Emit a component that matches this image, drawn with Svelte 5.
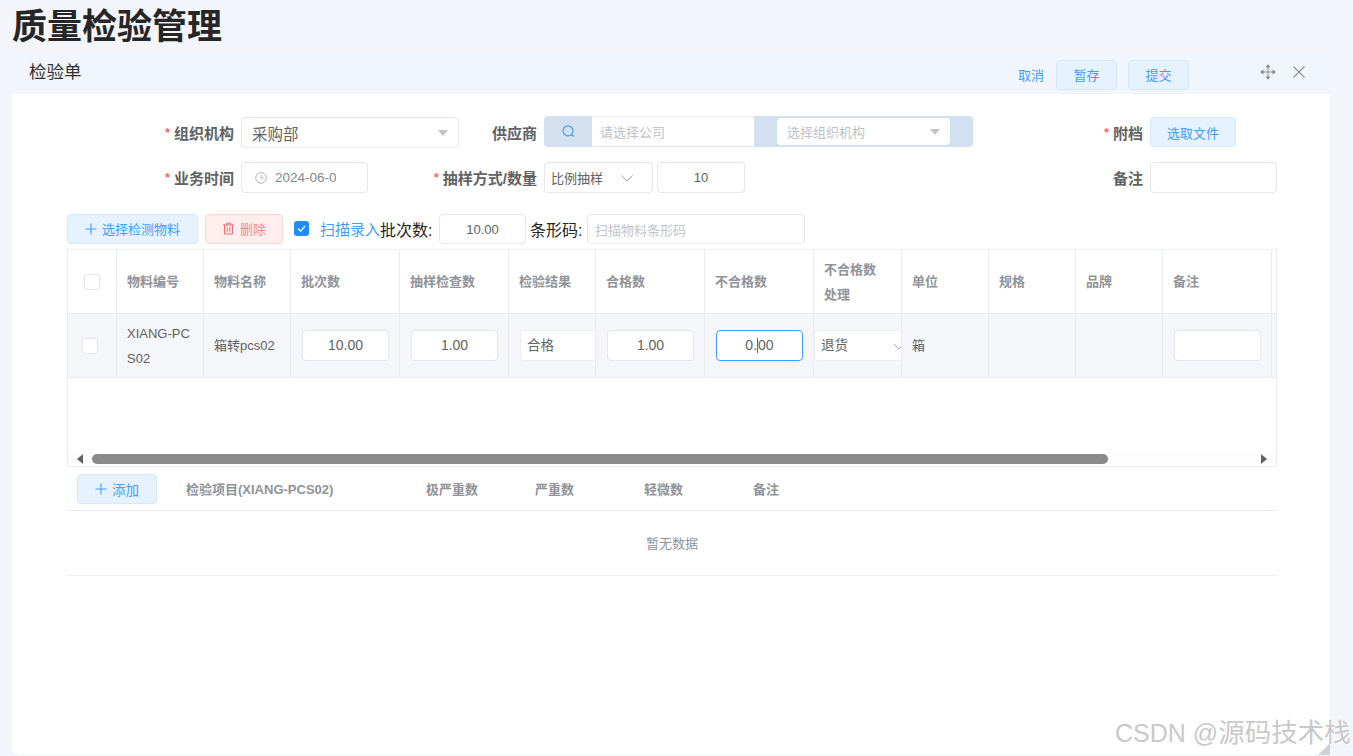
<script>
	const columns = [
		{ w: 49 }, { w: 87, title: '物料编号' }, { w: 87, title: '物料名称' }, { w: 109, title: '批次数' },
		{ w: 109, title: '抽样检查数' }, { w: 87, title: '检验结果' }, { w: 109, title: '合格数' },
		{ w: 109, title: '不合格数' }, { w: 88, title: '不合格数处理', wrap: true }, { w: 87, title: '单位' },
		{ w: 87, title: '规格' }, { w: 87, title: '品牌' }, { w: 109, title: '备注' }, { w: 40 }
	];
	const subHeads = [
		{ w: 240, title: '检验项目(XIANG-PCS02)' }, { w: 109, title: '极严重数' }, { w: 109, title: '严重数' },
		{ w: 109, title: '轻微数' }, { w: 109, title: '备注' }
	];
</script>

<div class="page">
	<h1>质量检验管理</h1>

	<section class="card">
		<header class="card-head">
			<span class="card-title">检验单</span>
			<div class="head-actions">
				<span class="link">取消</span>
				<span class="btn head-btn">暂存</span>
				<span class="btn head-btn">提交</span>
			</div>
			<div class="head-icons">
				<svg width="16" height="16" viewBox="0 0 16 16" fill="none" stroke="#8d9095" stroke-width="1">
					<path d="M8 1v14M1 8h14" />
					<path d="M6 3l2-2.200 2 2.200zM6 13l2 2.200 2-2.200zM3 6L.8 8 3 10zM13 6l2.200 2L13 10z" fill="#8d9095" />
				</svg>
				<svg width="14" height="14" viewBox="0 0 14 14" fill="none" stroke="#8d9095" stroke-width="1.100">
					<path d="M1.500 1.500l11 11M12.500 1.500l-11 11" />
				</svg>
			</div>
		</header>

		<div class="form">
			<label class="lbl"><i>*</i> 组织机构</label>
			<div class="field select big">
				<span>采购部</span>
				<b class="tri"></b>
			</div>
			<label class="lbl">供应商</label>
			<div class="supplier">
				<span class="search">
					<svg width="15" height="15" viewBox="0 0 15 15" fill="none" stroke="#409eff" stroke-width="1.200">
						<circle cx="7" cy="6.800" r="5" />
						<path d="M10.600 10.500l2 2" />
					</svg>
				</span>
				<span class="company">请选择公司</span>
				<span class="org-wrap">
					<span class="org"><span>选择组织机构</span><b class="tri"></b></span>
				</span>
			</div>
			<label class="lbl"><i>*</i> 附档</label>
			<div><span class="btn pick">选取文件</span></div>

			<label class="lbl"><i>*</i> 业务时间</label>
			<div class="field date">
				<svg width="14" height="14" viewBox="0 0 14 14" fill="none" stroke="#b4b7be" stroke-width="1">
					<circle cx="7" cy="7" r="5.300" />
					<path d="M7 3.800V7h2.800" />
				</svg>
				<span class="date-text">2024-06-05</span>
			</div>
			<label class="lbl"><i>*</i> 抽样方式/数量</label>
			<div class="sample">
				<div class="field select method">
					<span>比例抽样</span>
					<svg width="14" height="14" viewBox="0 0 14 14" fill="none" stroke="#a8abb2" stroke-width="1">
						<path d="M1.500 4.500L7 10l5.500-5.500" />
					</svg>
				</div>
				<div class="field center qty">10</div>
			</div>
			<label class="lbl">备注</label>
			<div class="field remark"></div>
		</div>

		<div class="toolbar">
			<span class="btn add-material">
				<svg class="plus" width="12" height="12" viewBox="0 0 12 12"><path d="M6 .5v11M.5 6h11" /></svg>
				选择检测物料
			</span>
			<span class="btn danger">
				<svg width="13" height="13" viewBox="0 0 13 13" fill="none" stroke="#f56c6c" stroke-width="1">
					<path d="M1 3h11M4.500 3V1.200h4V3M2.500 3v9h8V3M5.200 5.200v4.600M7.800 5.200v4.600" />
				</svg>
				删除
			</span>
			<span class="check on">
				<svg width="15" height="15" viewBox="0 0 15 15" fill="none" stroke="#fff" stroke-width="1.200">
					<path d="M4 7.500l2.600 2.700L11 5" />
				</svg>
			</span>
			<span class="scan">扫描录入</span>
			<span class="inline-lbl">批次数:</span>
			<div class="field center batch">10.00</div>
			<span class="inline-lbl barcode-lbl">条形码:</span>
			<div class="field barcode">扫描物料条形码</div>
		</div>

		<div class="table-wrap">
			<table>
				<colgroup>
					{#each columns as c}
						<col style="width: {c.w}px" />
					{/each}
				</colgroup>
				<thead>
					<tr>
						<th class="check-cell"><span class="check head-check"></span></th>
						{#each columns.slice(1) as c}
							<th>
								{#if c.wrap}不合格数<br />处理{:else}{c.title ?? ''}{/if}
							</th>
						{/each}
					</tr>
				</thead>
				<tbody>
					<tr>
						<td class="check-cell"><span class="check row-check"></span></td>
						<td class="wrap-code">XIANG-PC<br />S02</td>
						<td>箱转pcs02</td>
						<td class="pad"><div class="field center cell-input">10.00</div></td>
						<td class="pad"><div class="field center cell-input">1.00</div></td>
						<td class="pad clip"><div class="field cell-select">合格</div></td>
						<td class="pad"><div class="field center cell-input">1.00</div></td>
						<td class="pad"><div class="field center cell-input focus">0.<span class="caret"></span>00</div></td>
						<td class="clip flush">
							<div class="field cell-select reject">
								退货
								<svg width="12" height="12" viewBox="0 0 12 12" fill="none" stroke="#a8abb2" stroke-width="1">
									<path d="M1 4l5 5 5-5" />
								</svg>
							</div>
						</td>
						<td>箱</td>
						<td></td>
						<td></td>
						<td class="pad"><div class="field center cell-input"></div></td>
						<td></td>
					</tr>
				</tbody>
			</table>
			<div class="empty-space"></div>
			<div class="scrollbar">
				<b class="arrow left"></b>
				<span class="thumb"></span>
				<b class="arrow right"></b>
			</div>
		</div>

		<div class="sub-head">
			<span class="btn add">
				<svg class="plus" width="12" height="12" viewBox="0 0 12 12"><path d="M6 .5v11M.5 6h11" /></svg>
				添加
			</span>
			{#each subHeads as h}
				<span class="sub-col" style="width: {h.w}px">{h.title}</span>
			{/each}
		</div>
		<div class="no-data">暂无数据</div>

		<span class="resize"></span>
	</section>

	<div class="watermark">CSDN @<span class="wm-cjk">源码技术栈</span></div>
</div>

<style>
	:global(body) {
		margin: 0;
		background: #f4f5fb;
		font-family: "Liberation Sans", "Noto Sans CJK SC", sans-serif;
	}

	.page {
		position: relative;
		width: 1353px;
		height: 756px;
		overflow: hidden;
		padding: 0 23px 0 12px;
		box-sizing: border-box;
	}

	h1 {
		margin: 0;
		height: 52px;
		line-height: 54px;
		font-size: 35px;
		font-weight: 700;
		color: #262626;
	}

	.card {
		position: relative;
		width: 1318px;
		height: 703px;
		background: #fff;
		border-radius: 8px 8px 0 8px;
		box-sizing: border-box;
	}

	.card-head {
		display: flex;
		align-items: center;
		height: 42px;
		padding: 0 24px 0 17px;
		background: #f1f6fe;
		border-radius: 8px 8px 0 0;
	}

	.card-title {
		font-size: 17.500px;
		line-height: 42px;
		color: #303133;
		margin-top: -3px;
	}

	.head-actions {
		display: flex;
		align-items: center;
		gap: 11px;
		margin-left: auto;
		margin-top: 3px;
	}

	.link {
		font-size: 13px;
		color: #409eff;
		margin-right: 1px;
	}

	.btn {
		display: inline-flex;
		align-items: center;
		justify-content: center;
		gap: 5px;
		box-sizing: border-box;
		height: 30px;
		font-size: 13px;
		color: #409eff;
		background: #e6f2ff;
		border: 1px solid #d3e8fd;
		border-radius: 4px;
	}

	.head-btn {
		width: 61px;
	}

	.head-icons {
		display: flex;
		align-items: center;
		gap: 16px;
		margin-left: 71px;
		margin-top: -3px;
	}

	.form {
		display: grid;
		grid-template-columns: 229px 218px 85px 429px 177px 126px;
		grid-auto-rows: 31px;
		row-gap: 14px;
		padding-top: 23px;
	}

	.lbl {
		display: flex;
		align-items: center;
		justify-content: flex-end;
		gap: 4px;
		padding-right: 7px;
		font-size: 15px;
		font-weight: 700;
		color: #606266;
		white-space: nowrap;
	}

	.lbl i {
		font-style: normal;
		font-size: 13px;
		color: #f56c6c;
	}

	.field {
		display: flex;
		align-items: center;
		box-sizing: border-box;
		height: 31px;
		background: #fff;
		border: 1px solid #e4e7ed;
		border-radius: 4px;
		font-size: 13px;
		color: #606266;
	}

	.center {
		justify-content: center;
	}

	.select.big {
		justify-content: space-between;
		padding: 0 10px;
		font-size: 15.500px;
	}

	.tri {
		width: 0;
		height: 0;
		border-left: 5px solid transparent;
		border-right: 5px solid transparent;
		border-top: 6px solid #c0c4cc;
	}

	.supplier {
		display: flex;
		height: 31px;
		margin-top: -1px;
		border-radius: 4px;
		background: #d3e0f0;
		overflow: hidden;
		font-size: 13px;
	}

	.search {
		display: flex;
		align-items: center;
		justify-content: center;
		width: 48px;
	}

	.company {
		display: flex;
		align-items: center;
		width: 162px;
		padding-left: 8px;
		box-sizing: border-box;
		background: #fff;
		color: #bfc2c8;
		border-top: 1px solid #e4e7ed;
		border-bottom: 1px solid #e4e7ed;
	}

	.org-wrap {
		flex: 1;
		display: flex;
		align-items: center;
		padding: 0 23px;
	}

	.org {
		display: flex;
		align-items: center;
		justify-content: space-between;
		box-sizing: border-box;
		width: 173px;
		height: 27px;
		padding: 0 10px;
		background: #fff;
		border-radius: 4px;
		color: #bfc2c8;
	}

	.pick {
		width: 86px;
		height: 30px;
	}

	.date {
		width: 127px;
		padding-left: 12px;
		gap: 7px;
	}

	.date-text {
		display: block;
		width: 61px;
		overflow: hidden;
		white-space: nowrap;
		font-size: 13.500px;
		color: #85888e;
	}

	.sample {
		display: flex;
		gap: 4px;
	}

	.method {
		width: 109px;
		justify-content: space-between;
		padding: 0 18px 0 6px;
	}

	.qty {
		width: 88px;
	}

	.remark {
		width: 127px;
	}

	.toolbar {
		display: flex;
		align-items: center;
		height: 31px;
		margin: 20px 0 0 55px;
	}

	.add-material {
		width: 131px;
		height: 30px;
	}

	.plus {
		stroke: #409eff;
		stroke-width: 1.100;
		fill: none;
	}

	.danger {
		width: 78px;
		height: 30px;
		margin-left: 7px;
		color: #f78989;
		background: #feeeee;
		border-color: #fbd4d4;
	}

	.check {
		display: block;
		box-sizing: border-box;
		width: 16px;
		height: 16px;
		background: #fff;
		border: 1px solid #e4e7ed;
		border-radius: 3px;
	}

	.check.on {
		width: 15px;
		height: 15px;
		margin-left: 11px;
		background: #1f8fff;
		border: 0;
	}

	.check.on svg {
		display: block;
	}

	.scan {
		margin-left: 11px;
		font-size: 15px;
		color: #409eff;
		white-space: nowrap;
	}

	.inline-lbl {
		font-size: 16px;
		color: #262626;
		width: 58px;
		white-space: nowrap;
	}

	.barcode-lbl {
		margin-left: 4px;
		width: 57px;
	}

	.batch {
		width: 87px;
		height: 30px;
		margin-left: 1px;
		margin-top: 1px;
	}

	.barcode {
		width: 218px;
		height: 30px;
		margin-top: 1px;
		padding-left: 7px;
		color: #c0c4cc;
	}

	.table-wrap {
		width: 1210px;
		height: 218px;
		margin: 5px 0 0 55px;
		overflow: hidden;
		position: relative;
		box-sizing: border-box;
		border: 1px solid #e9edf3;
	}

	table {
		table-layout: fixed;
		width: 1244px;
		border-collapse: separate;
		border-spacing: 0;
		font-size: 13px;
		color: #606266;
	}

	th,
	td {
		box-sizing: border-box;
		height: 64px;
		padding: 0 10px;
		text-align: left;
		vertical-align: middle;
		border-right: 1px solid #e8ecf2;
		border-bottom: 1px solid #e8ecf2;
		line-height: 25px;
	}

	th {
		font-weight: 700;
		color: #909399;
	}

	td {
		background: #f4f6fa;
	}

	.check-cell {
		padding: 0;
	}

	.head-check {
		margin-left: 16px;
	}

	.row-check {
		margin-left: 14px;
	}

	.wrap-code {
		white-space: nowrap;
	}

	.pad {
		padding: 0 0 0 11px;
	}

	.clip {
		overflow: hidden;
	}

	.flush {
		padding: 0;
	}

	.cell-input {
		width: 87px;
		height: 31px;
		font-size: 14px;
	}

	.cell-select {
		width: 100px;
		height: 31px;
		padding-left: 6px;
		border-color: #eceef2;
		font-size: 13.500px;
	}

	.reject {
		width: 88px;
		position: relative;
	}

	.reject svg {
		position: absolute;
		left: 78px;
		top: 9px;
	}

	.focus {
		border-color: #409eff;
	}

	.caret {
		display: inline-block;
		width: 1px;
		height: 15px;
		background: #606266;
	}

	.empty-space {
		height: 73px;
	}

	.scrollbar {
		position: relative;
		display: flex;
		align-items: center;
		height: 15px;
		background: #fdfdfe;
	}

	.thumb {
		position: absolute;
		left: 24px;
		width: 1016px;
		height: 10px;
		background: #8a8a8a;
		border-radius: 5px;
	}

	.arrow {
		position: absolute;
		width: 0;
		height: 0;
		border-top: 5px solid transparent;
		border-bottom: 5px solid transparent;
	}

	.arrow.left {
		left: 9px;
		border-right: 6px solid #606266;
	}

	.arrow.right {
		left: 1193px;
		border-left: 6px solid #606266;
	}

	.sub-head {
		display: flex;
		align-items: center;
		width: 1210px;
		height: 44px;
		margin-left: 55px;
		box-sizing: border-box;
		padding: 1px 0 0 10px;
		border-bottom: 1px solid #e9ebf0;
		font-size: 13px;
		font-weight: 700;
		color: #909399;
	}

	.add {
		width: 80px;
		height: 30px;
		margin-right: 29px;
		font-weight: 400;
		font-size: 13.500px;
		flex: none;
	}

	.sub-col {
		flex: none;
		margin-top: -2px;
	}

	.no-data {
		display: flex;
		align-items: center;
		justify-content: center;
		width: 1210px;
		height: 65px;
		margin-left: 55px;
		padding-bottom: 2px;
		box-sizing: border-box;
		border-bottom: 1px solid #eceef2;
		font-size: 13px;
		color: #909399;
	}

	.resize {
		position: absolute;
		right: 0;
		bottom: 0;
		width: 0;
		height: 0;
		border-left: 12px solid transparent;
		border-bottom: 12px solid #cfd1d4;
	}

	.watermark {
		position: absolute;
		left: 1115px;
		top: 715px;
		font-size: 25px;
		line-height: 36px;
		white-space: nowrap;
		color: #c9c9c9;
		text-shadow: 1px 1px 1px rgba(255, 255, 255, 0.8);
	}

	.wm-cjk {
		font-size: 26.500px;
	}
</style>
